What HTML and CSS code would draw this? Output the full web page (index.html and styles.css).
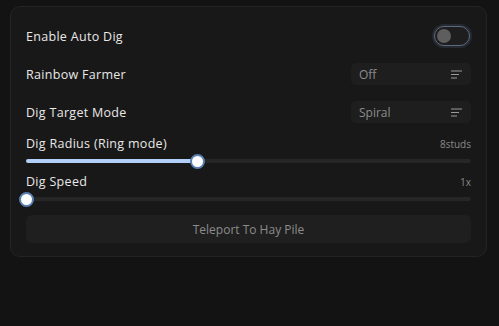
FILE: index.html
```html
<!DOCTYPE html>
<html lang="en">
<head>
  <meta charset="UTF-8">
  <title>Auto Dig</title>
  <link rel="stylesheet" href="styles.css">
</head>
<body>
  <div class="panel">
    <div class="row">
      <span class="label">Enable Auto Dig</span>
      <div class="toggle"><div class="knob"></div></div>
    </div>

    <div class="row">
      <span class="label">Rainbow Farmer</span>
      <div class="dropdown">
        <span>Off</span>
        <svg width="12" height="9" viewBox="0 0 12 9"><path d="M0 1h11M0 4.5h8M0 8h6" stroke="#9a9a9a" stroke-width="1"/></svg>
      </div>
    </div>

    <div class="row">
      <span class="label">Dig Target Mode</span>
      <div class="dropdown">
        <span>Spiral</span>
        <svg width="12" height="9" viewBox="0 0 12 9"><path d="M0 1h11M0 4.5h8M0 8h6" stroke="#9a9a9a" stroke-width="1"/></svg>
      </div>
    </div>

    <div class="slider">
      <div class="slider-head">
        <span class="label">Dig Radius (Ring mode)</span>
        <span class="value">8studs</span>
      </div>
      <div class="track">
        <div class="fill" style="width: 38.4%"></div>
        <div class="thumb" style="left: 38.4%"></div>
      </div>
    </div>

    <div class="slider">
      <div class="slider-head">
        <span class="label">Dig Speed</span>
        <span class="value">1x</span>
      </div>
      <div class="track">
        <div class="fill" style="width: 0%"></div>
        <div class="thumb" style="left: 0%"></div>
      </div>
    </div>

    <button class="action">Teleport To Hay Pile</button>
  </div>
</body>
</html>
```

FILE: styles.css
```css
body {
  margin: 0;
  background-color: #131313;
  font-family: "Open Sans", sans-serif;
  color: #e6e6e6;
}
.panel {
  margin: 6px 12px 0 10px;
  width: 445px;
  padding: 10px 15px 13px 15px;
  background: #181818;
  border: 1px solid #242424;
  border-radius: 10px;
}
.row {
  display: flex;
  align-items: center;
  justify-content: space-between;
  height: 38px;
}
.label {
  font-size: 12.5px;
  letter-spacing: 0.3px;
  color: #e8e8e8;
}
.toggle {
  position: relative;
  width: 34px;
  height: 18px;
  border: 1.5px solid #5b6a80;
  border-radius: 11px;
  background: #1e1e1e;
  box-shadow: 0 0 0 2px #262a30;
  margin-right: 1px;
}
.knob {
  position: absolute;
  left: 2px;
  top: 2px;
  width: 14px;
  height: 14px;
  border-radius: 50%;
  background: #5e5e5e;
}
.dropdown {
  display: flex;
  align-items: center;
  justify-content: space-between;
  width: 104px;
  height: 22px;
  padding: 0 8px;
  background: #1e1e1e;
  border-radius: 5px;
  color: #8c8c8c;
  font-size: 12px;
}
.slider {
  padding-top: 4px;
}
.slider-head {
  display: flex;
  justify-content: space-between;
  align-items: center;
  height: 17px;
}
.value {
  font-size: 10px;
  color: #8a8a8a;
}
.track {
  position: relative;
  height: 4px;
  margin: 7px 0 6px;
  background: #262626;
  border-radius: 2px;
}
.fill {
  height: 100%;
  background: #b2d0f7;
  border-radius: 2px;
}
.thumb {
  position: absolute;
  top: 50%;
  width: 11px;
  height: 11px;
  margin: -7.5px 0 0 -7px;
  border-radius: 50%;
  background: #ffffff;
  border: 2px solid #5a7eb0;
}
.action {
  display: block;
  width: 100%;
  height: 28px;
  margin-top: 14px;
  border: none;
  border-radius: 6px;
  background: #1f1f1f;
  color: #8c8c8c;
  font-family: "Open Sans", sans-serif;
  font-size: 12px;
}
```
